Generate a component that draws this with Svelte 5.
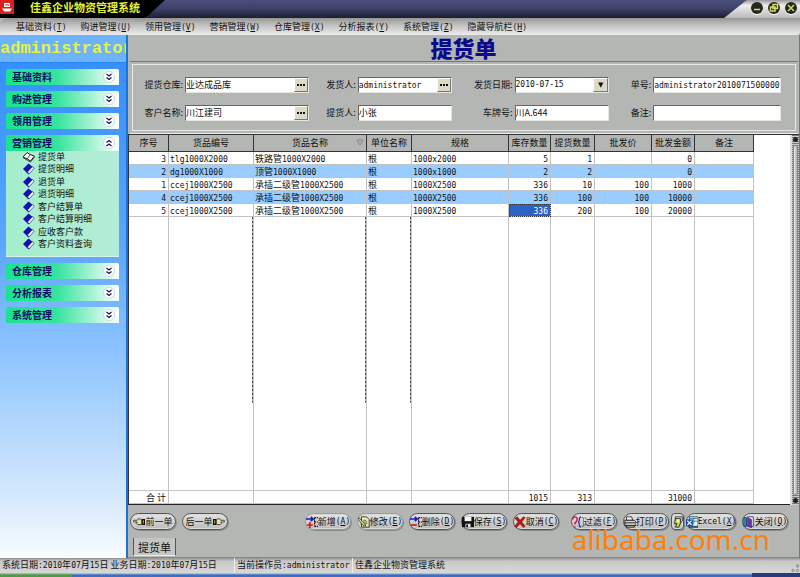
<script lang="ts">
	const menus = [
		{ label: '基础资料', key: 'T' },
		{ label: '购进管理', key: 'U' },
		{ label: '领用管理', key: 'V' },
		{ label: '营销管理', key: 'W' },
		{ label: '仓库管理', key: 'X' },
		{ label: '分析报表', key: 'Y' },
		{ label: '系统管理', key: 'Z' },
		{ label: '隐藏导航栏', key: 'H' }
	];

	const groups = [
		{ title: '基础资料', items: [] },
		{ title: '购进管理', items: [] },
		{ title: '领用管理', items: [] },
		{
			title: '营销管理',
			items: ['提货单', '提货明细', '退货单', '退货明细', '客户结算单', '客户结算明细', '应收客户款', '客户资料查询']
		},
		{ title: '仓库管理', items: [] },
		{ title: '分析报表', items: [] },
		{ title: '系统管理', items: [] }
	];

	const columns = ['序号', '货品编号', '货品名称', '单位名称', '规格', '库存数量', '提货数量', '批发价', '批发金额', '备注'];
	const numeric = [0, 5, 6, 7, 8];
	const worn = [1, 2, 3];

	const rows = [
		['3', 'tlg1000X2000', '铁路管1000X2000', '根', '1000x2000', '5', '1', '', '0', ''],
		['2', 'dg1000X1000', '顶管1000X1000', '根', '1000x1000', '2', '2', '', '0', ''],
		['1', 'ccej1000X2500', '承插二级管1000X2500', '根', '1000X2500', '336', '10', '100', '1000', ''],
		['4', 'ccej1000X2500', '承插二级管1000X2500', '根', '1000X2500', '336', '100', '100', '10000', ''],
		['5', 'ccej1000X2500', '承插二级管1000X2500', '根', '1000X2500', '336', '200', '100', '20000', '']
	];
	const totals = ['合 计', '', '', '', '', '1015', '313', '', '31000', ''];

	const editActions = [
		{ icon: 'add', label: '新增', key: 'A', off: true },
		{ icon: 'edit', label: '修改', key: 'E', off: true },
		{ icon: 'del', label: '删除', key: 'D' },
		{ icon: 'save', label: '保存', key: 'S' },
		{ icon: 'cancel', label: '取消', key: 'C' }
	];

	let open = $state('营销管理');

	// Latin runs are set in a narrower mono face than the Chinese around them
	function runs(text: string) {
		return text.match(/[\x21-\x7e]+|[^\x21-\x7e]+/g) ?? [];
	}
</script>

{#snippet mixed(text: string)}
	{#each runs(text) as run}{#if /^[\x21-\x7e]/.test(run)}<span class="latin">{run}</span>{:else}{run}{/if}{/each}
{/snippet}

{#snippet keyed(label: string, key: string)}
	{@render mixed(label)}<span class="latin">(<u>{key}</u>)</span>
{/snippet}

{#snippet icon(name: string)}
	<svg class="icon" viewBox="0 0 14 14" aria-hidden="true">
		{#if name === 'add' || name === 'del'}
			<path d="M0 3.5h8M5.5 1 8.5 3.5 5.5 6" stroke="#1818d0" stroke-width="1.8" fill="none" />
			<path d="M10 2h4M10 2v10M10 7h4M10 12h4" stroke="#111" stroke-width="1.4" stroke-dasharray="2 1" fill="none" />
			{#if name === 'add'}
				<path d="M4.5 7v7M1 10.5h7" stroke="#e01818" stroke-width="2" />
			{:else}
				<path d="M1 10.5h7" stroke="#e01818" stroke-width="2" />
			{/if}
		{:else if name === 'edit'}
			<path d="M4 1h6l3 3v9H4z" fill="#e9eebc" stroke="#222" />
			<path d="M6 5h4M6 7h5M6 9h5" stroke="#333" stroke-width=".8" />
			<path d="M1 2 8 9l1 3-3-1L0 4z" fill="#c9d36b" stroke="#222" stroke-width=".8" />
		{:else if name === 'save'}
			<path d="M0 1h14v12H0z" fill="#111" />
			<path d="M3 1h8v5H3z" fill="#f4f4f4" />
			<path d="M4 9h6v4H4z" fill="#ddd" />
			<path d="M5 10h2v3H5z" fill="#111" />
		{:else if name === 'cancel'}
			<path d="M1 2.5 4 1l3 4 4-4 2 1-4 5 4 5-2 1.5-4-4.5-4 4.5L.5 12 5 7z" fill="#c01414" stroke="#701010" stroke-width=".6" />
		{:else if name === 'filter'}
			<path d="M1 4q0-3 2.5-3T6 4q0 2-2.5 4v2M3.5 12v1.5" stroke="#d01c3c" stroke-width="1.7" fill="none" />
			<path d="M10.5 1Q8.5 1 8.5 4T7 7Q8.5 7 8.5 10t2 3" stroke="#2a2ad0" stroke-width="1.4" fill="none" />
			<path d="M11.5 2h2v10h-2" stroke="#333" stroke-dasharray="1.5 1" fill="none" />
		{:else if name === 'print'}
			<path d="M3 1h6l1 4H3z" fill="#fff" stroke="#222" />
			<path d="M1 5h11l2 2v4H1z" fill="#d6d6d6" stroke="#111" />
			<path d="M1 8h12M3 11v2h9v-2" stroke="#111" fill="none" />
			<path d="M9 9.5h2" stroke="#dada28" />
		{:else if name === 'preview'}
			<path d="M4 1h8v5L9 9H4z" fill="#f4f4e0" stroke="#222" />
			<path d="M4 3h6v5L8 13H4l2-4H3z" fill="#c9e04c" stroke="#222" />
			<path d="M6 4h2v3H6z" fill="#fff" />
		{:else if name === 'excel'}
			<path d="M4 1h10v11H4z" fill="#dff" stroke="#124a68" />
			<path d="M5 3h8M5 6h8M9 2v8" stroke="#247a9a" />
			<path d="M0 4h8v8H0z" fill="#164da8" />
			<path d="m1.5 5.5 5 5m0-5-5 5" stroke="#fff" stroke-width="1.3" />
			<path d="M3 13h11" stroke="#111" />
		{:else if name === 'close'}
			<path d="M1 2h3v10H1z" fill="#23a6b8" stroke="#13306c" />
			<path d="M5 1h7v11H5z" fill="#fff" stroke="#13306c" />
			<path d="m6 2 4 2v10l-4-2z" fill="#7034a4" stroke="#301060" stroke-width=".6" />
		{:else if name === 'prev' || name === 'next'}
			<g transform={name === 'next' ? 'matrix(-1 0 0 1 14 0)' : undefined}>
				<path d="M10 4v6H5.5L4 8.5 5 7H1Q-.3 6 1 5h4l1.5-2z" fill="#e8e39c" stroke="#222" stroke-width=".9" />
				<path d="M10.5 3.5H14v7h-3.5z" fill="#111" />
				<path d="M12 5v4" stroke="#c8c878" />
			</g>
		{/if}
	</svg>
{/snippet}

<svelte:head>
	<title>佳鑫企业物资管理系统</title>
</svelte:head>

<div class="window">
	<header class="titlebar">
		<div class="brand">
			<svg class="logo" viewBox="0 0 14 14" aria-hidden="true">
				<path d="M0 0h14v14H0z" fill="#d9201c" />
				<path d="M4 3h6v4H4zM7 1v6M2 8.5h10l-2 3H4z" fill="#fff" />
				<path d="M5 5h4M1 12.5h12" stroke="#d9201c" />
			</svg>
			<h1>佳鑫企业物资管理系统</h1>
		</div>
		<div class="controls">
			<button aria-label="最小化"><svg viewBox="0 0 12 12"><path d="M3 7.5h6" /></svg></button>
			<button aria-label="还原"><svg viewBox="0 0 12 12"><path d="M5 2.5h4.5v4H5zM2.5 5H7v4H2.5z" /></svg></button>
			<button aria-label="关闭窗口"><svg viewBox="0 0 12 12"><path d="m3 3 6 6m0-6L3 9" /></svg></button>
		</div>
	</header>

	<nav class="menubar">
		{#each menus as menu}
			<a href="#menu">{@render keyed(menu.label, menu.key)}</a>
		{/each}
	</nav>

	<div class="body">
		<aside class="sidebar">
			<p class="user">administrator</p>
			<div class="groups">
				{#each groups as group}
					<section class="group">
						<button class="group-head" onclick={() => (open = open === group.title ? '' : group.title)}>
							<span>{group.title}</span>
							<svg class="chevron" class:up={open === group.title} viewBox="0 0 12 12" aria-hidden="true">
								<circle cx="6" cy="6" r="5.5" fill="#fff" stroke="#c4dce0" />
								<path d="m3.5 3 2.5 2L8.5 3m-5 3.5 2.5 2 2.5-2" />
							</svg>
						</button>
						{#if open === group.title && group.items.length}
							<ul>
								{#each group.items as item, i}
									<li>
										<svg class="book" viewBox="0 0 13 12" aria-hidden="true">
											{#if i === 0}
												<path d="M1 6 5 1.5l3 2L12.5 5l-4 5-3-2z" fill="#fff" stroke="#222" />
												<path d="m5 8 3-4M1 6.5 5 9l3.5 2 4-5" stroke="#222" fill="none" stroke-width=".8" />
											{:else}
												<path d="m1 6 5.5-5.5L12 5 6.5 11.5z" fill="#1111b0" />
												<path d="m5.5 9 5-5.5 1.5 2-5 5.5z" fill="#fff" stroke="#1111b0" stroke-width=".6" />
											{/if}
										</svg>
										<a href="#item">{item}</a>
									</li>
								{/each}
							</ul>
						{/if}
					</section>
				{/each}
			</div>
		</aside>

		<main>
			<h2>提货单</h2>

			<div class="panel">
				<form class="fields">
					<label for="depot">提货仓库:</label>
					<div class="box">
						<input id="depot" value="业达成品库" />
						<button type="button" class="more" aria-label="选择仓库"></button>
					</div>
					<label for="sender">发货人:</label>
					<div class="box">
						<input id="sender" class="latin" value="administrator" />
						<button type="button" class="more" aria-label="选择发货人"></button>
					</div>
					<label for="date">发货日期:</label>
					<div class="box drop">
						<select id="date" class="latin"><option>2010-07-15</option></select>
					</div>
					<label for="serial">单号:</label>
					<div class="box"><input id="serial" class="latin" value="administrator2010071500000" /></div>

					<label for="client">客户名称:</label>
					<div class="box">
						<input id="client" value="川江建司" />
						<button type="button" class="more" aria-label="选择客户"></button>
					</div>
					<label for="taker">提货人:</label>
					<div class="box"><input id="taker" value="小张" /></div>
					<label for="plate">车牌号:</label>
					<div class="box"><input id="plate" value="川A.644" /></div>
					<label for="note">备注:</label>
					<div class="box"><input id="note" value="" /></div>
				</form>
			</div>

			<div class="grid">
				<div class="sheet">
					<table>
						<colgroup>
							{#each columns as _, i}<col class="c{i}" />{/each}
						</colgroup>
						<thead>
							<tr>
								{#each columns as column, i}
									<th>{column}{#if i === 2}<svg class="sort" viewBox="0 0 8 7" aria-hidden="true"><path d="M1 1h6L4 6z" /></svg>{/if}</th>
								{/each}
							</tr>
						</thead>
						<tbody>
							{#each rows as row, r}
								<tr class:alt={r % 2 === 1}>
									{#each row as cell, i}
										<td class:num={numeric.includes(i)} class:picked={r === 4 && i === 5}>{@render mixed(cell)}</td>
									{/each}
								</tr>
							{/each}
							<tr class="filler">
								{#each columns as _, i}<td class:worn={worn.includes(i)}></td>{/each}
							</tr>
						</tbody>
						<tfoot>
							<tr>
								{#each totals as cell, i}
									<td class:num={numeric.includes(i)}>{@render mixed(cell)}</td>
								{/each}
							</tr>
						</tfoot>
					</table>
				</div>
				<div class="scroll">
					<span class="knob"></span>
					<span class="thumb"></span>
					<span class="knob"></span>
				</div>
			</div>

			<div class="toolbar">
				<div class="set">
					<button>{@render icon('prev')}前一单</button>
					<button>后一单{@render icon('next')}</button>
				</div>
				<div class="set actions">
					{#each editActions as action}
						<button class:off={action.off}>{@render icon(action.icon)}{@render keyed(action.label, action.key)}</button>
					{/each}
				</div>
				<div class="set output">
					<button>{@render icon('filter')}{@render keyed('过滤', 'F')}</button>
					<div class="set tight">
						<button>{@render icon('print')}{@render keyed('打印', 'P')}</button>
						<button class="mini" aria-label="预览">{@render icon('preview')}</button>
						<button class="wide">{@render icon('excel')}{@render keyed('Excel', 'X')}</button>
					</div>
					<button>{@render icon('close')}{@render keyed('关闭', 'Q')}</button>
				</div>
				<p class="watermark">alibaba.com.cn</p>
			</div>

			<div class="tabs"><button>提货单</button></div>
		</main>
	</div>

	<footer class="status">
		<span class="dates">{@render mixed('系统日期:2010年07月15日 业务日期:2010年07月15日')}</span>
		<span class="operator">{@render mixed('当前操作员:administrator')}</span>
		<span class="company">佳鑫企业物资管理系统</span>
		<svg class="grip" viewBox="0 0 9 9" aria-hidden="true">
			<circle cx="6.5" cy="2" r="1.3" /><circle cx="2" cy="6.5" r="1.3" /><circle cx="6.5" cy="6.5" r="1.3" />
		</svg>
	</footer>
	<div class="taskbar"><span class="start"></span><span class="tray"></span></div>
</div>

<style>
	:global(body) {
		margin: 0;
	}

	.window {
		display: flex;
		flex-direction: column;
		min-height: 100vh;
		background: #b4b6b3;
		color: #111;
		font: 9px/12px 'Noto Sans CJK SC', sans-serif;
	}

	.window * {
		box-sizing: border-box;
	}

	button,
	input,
	select {
		margin: 0;
		padding: 0;
		border: 0;
		font: inherit;
		color: inherit;
	}

	a {
		color: inherit;
		text-decoration: none;
	}

	.latin {
		font-family: 'DejaVu Sans Mono', 'Noto Sans CJK SC', monospace;
		font-size: 8px;
		line-height: 8px;
	}

	.titlebar {
		display: flex;
		justify-content: space-between;
		height: 18px;
		background: linear-gradient(#4c4f7c, #3e4068 50%, #1d1c30);
	}

	.brand {
		display: flex;
		gap: 16px;
		width: 165px;
		background: #000;
		clip-path: polygon(0 0, 100% 0, 90% 85%, 87% 100%, 0 100%);
	}

	.logo {
		width: 14px;
		height: 14px;
	}

	h1 {
		margin: 0;
		font-size: 11px;
		line-height: 14px;
		font-weight: 700;
		color: #e2f23c;
	}

	.controls {
		display: flex;
		justify-content: flex-end;
		gap: 5px;
		width: 76px;
		padding: 2px 3px 0 0;
		background: linear-gradient(#999, #eee 30%, #b9b9b9);
		clip-path: polygon(30% 0, 100% 0, 100% 100%, 0 100%);
	}

	.controls button {
		width: 12px;
		height: 12px;
		border-radius: 50%;
		background: #25281c;
		box-shadow: 0 1px 1px #fff;
	}

	.controls svg {
		display: block;
		fill: none;
		stroke: #d4dc6a;
		stroke-width: 1.5;
	}

	.menubar {
		display: flex;
		gap: 14px;
		height: 17px;
		padding: 3px 16px 0;
		border-radius: 8px 0 4px 0;
		background: linear-gradient(#949694, #bfbfbf 40%, #ededed);
		white-space: nowrap;
	}

	.body {
		display: flex;
		flex: 1;
	}

	.sidebar {
		flex: 0 0 128px;
		width: 128px;
		border-right: 2px solid #1c72d8;
		background: linear-gradient(#2f8cff, #5ca6fb 40%, #8cc3ff 60%, #d4e8fc 88%, #f8fcff);
	}

	.user {
		margin: 0;
		padding-top: 2px;
		height: 28px;
		overflow: hidden;
		background: #6cb2fd;
		border-bottom: 1px solid #2585f4;
		font: 700 17px/24px 'Liberation Mono', monospace;
		color: #eaf23a;
	}

	.groups {
		display: flex;
		flex-direction: column;
		gap: 6px;
		padding: 6px 7px 0 6px;
	}

	.group-head {
		display: flex;
		align-items: center;
		justify-content: space-between;
		width: 100%;
		height: 16px;
		padding: 0 4px 0 6px;
		border-radius: 2px 2px 0 0;
		background: linear-gradient(90deg, #1be291, #35e39d 45%, #fff);
		font-size: 10px;
		line-height: 14px;
		font-weight: 700;
		color: #0b0b66;
	}

	.chevron {
		width: 12px;
		height: 12px;
	}

	.chevron path {
		fill: none;
		stroke: #111150;
		stroke-width: 1.2;
	}

	.chevron.up {
		transform: rotate(180deg);
	}

	ul {
		display: flex;
		flex-direction: column;
		justify-content: space-between;
		height: 106px;
		margin: 0;
		padding: 0 0 6px 16px;
		background: linear-gradient(90deg, #a4eecb, #b4ecd8);
		border-bottom: 1px solid #d8f6ea;
		list-style: none;
	}

	li {
		display: flex;
		align-items: center;
		gap: 3px;
		height: 12px;
	}

	.book {
		width: 13px;
		height: 12px;
	}

	main {
		display: flex;
		flex: 1;
		flex-direction: column;
		min-width: 0;
		border-right: 1px solid #777;
	}

	h2 {
		margin: 0;
		height: 26px;
		font-size: 22px;
		line-height: 25px;
		font-weight: 900;
		text-align: center;
		color: #0a0a8c;
	}

	.panel {
		margin: 0 1px 0 2px;
		padding: 2px;
		border-top: 1px solid #777;
		border-bottom: 1px solid #eee;
	}

	.fields {
		display: grid;
		grid-template-columns: 43px 124fr 49px 94fr 63px 95fr 44px 128fr;
		row-gap: 12px;
		align-items: center;
		padding: 12px 14px 9px 9px;
		border: 1px solid #e8e8e8;
	}

	label {
		padding-right: 2px;
		text-align: right;
		white-space: nowrap;
	}

	.box {
		display: flex;
		height: 16px;
		min-width: 0;
		border: 1px solid #e6e6e0;
		border-top-color: #666;
		border-left-color: #666;
		background: #fff;
	}

	input,
	select {
		flex: 1;
		min-width: 0;
		width: 100%;
		background: transparent;
		outline: 0;
	}

	select {
		appearance: none;
	}

	select.latin {
		line-height: 14px;
	}

	.more {
		flex: 0 0 14px;
		border: 1px solid #fff;
		border-right-color: #777;
		border-bottom-color: #777;
		background: repeating-linear-gradient(90deg, #111 0 2px, transparent 2px 3px) 2px 5px / 8px 2px no-repeat #dedac8;
	}

	.drop::after {
		content: '▼';
		flex: 0 0 13px;
		border: 1px solid #fff;
		border-right-color: #777;
		border-bottom-color: #777;
		background: #dedac8;
		font: 7px/12px 'DejaVu Sans', sans-serif;
		text-align: center;
	}

	.grid {
		display: flex;
		flex: 1;
		border-top: 1px solid #333;
	}

	.sheet {
		display: flex;
		flex: 1;
		min-width: 0;
		background: #fff;
		border-bottom: 1px solid #222;
		border-left: 1px solid #333;
	}

	table {
		width: 625px;
		table-layout: fixed;
		border-collapse: separate;
		border-spacing: 0;
	}

	.c0 { width: 40px; }
	.c1 { width: 85px; }
	.c2 { width: 113px; }
	.c3 { width: 45px; }
	.c4 { width: 97px; }
	.c5 { width: 42px; }
	.c6 { width: 44px; }
	.c7 { width: 57px; }
	.c8 { width: 43px; }
	.c9 { width: 59px; }

	th {
		position: relative;
		height: 17px;
		padding: 0;
		border-right: 1px solid #333;
		border-bottom: 1px solid #333;
		background: #b4b6b3;
		font-weight: 400;
		white-space: nowrap;
	}

	.sort {
		position: absolute;
		right: 2px;
		top: 4px;
		width: 8px;
		height: 7px;
		fill: none;
		stroke: #888;
	}

	td {
		height: 13px;
		padding: 0 2px 0 1px;
		border-right: 1px solid #c2c2c2;
		border-bottom: 1px solid #c2c2c2;
		line-height: 11px;
		white-space: nowrap;
	}

	.num {
		text-align: right;
	}

	.alt td {
		background: #99ccff;
		border-bottom-color: #99ccff;
	}

	.picked {
		background: #2b62c4;
		color: #fff;
		outline: 1px dotted #333;
		outline-offset: -1px;
	}

	.filler td {
		height: auto;
	}

	.filler .worn {
		background: repeating-linear-gradient(#444 0 2px, #bbb 2px 4px) right top / 1px 68% no-repeat;
	}

	.scroll {
		display: flex;
		flex: 0 0 9px;
		flex-direction: column;
		align-items: center;
		padding: 2px 0;
		background: repeating-linear-gradient(#777 0 1px, #ccc 1px 2px);
		border-left: 2px solid #ddd;
	}

	.knob {
		width: 5px;
		height: 5px;
		border-radius: 50%;
		background: #222;
	}

	.thumb {
		flex: 1;
		width: 5px;
		margin: 3px 0;
		border: 1px solid #888;
		border-radius: 3px;
		background: linear-gradient(90deg, #eee, #aaa);
	}

	.toolbar {
		position: relative;
		display: flex;
		align-items: center;
		height: 33px;
		padding: 0 11px 0 2px;
	}

	.set {
		display: flex;
		gap: 6px;
	}

	.tight {
		gap: 2px;
	}

	.actions {
		margin-left: auto;
	}

	.output {
		margin-left: 12px;
	}

	.toolbar button {
		display: flex;
		align-items: center;
		justify-content: center;
		width: 46px;
		height: 17px;
		border: 1px solid #555;
		border-radius: 9px;
		background: linear-gradient(#e4e4e4, #bcbcbc);
		box-shadow: inset 0 0 0 1px #d9d9d9, 1px 1px 0 #8a8a8a;
		white-space: nowrap;
	}

	.toolbar .off {
		border-color: #999;
	}

	.toolbar .mini {
		width: 13px;
		border-radius: 4px;
	}

	.toolbar .wide {
		width: 50px;
	}

	.icon {
		flex: none;
		width: 12px;
		height: 12px;
	}

	.watermark {
		position: absolute;
		right: 29px;
		top: 24px;
		margin: 0;
		font: 28px/20px 'Noto Sans', sans-serif;
		color: #ff7f0e;
		pointer-events: none;
	}

	.tabs {
		height: 20px;
		padding-left: 5px;
		border-bottom: 1px solid #888;
	}

	.tabs button {
		height: 18px;
		padding: 0 4px;
		border-left: 1px solid #555;
		border-right: 1px solid #555;
		border-bottom: 1px solid #eee;
		background: #c4c6c3;
		font-size: 11px;
		line-height: 16px;
	}

	.status {
		display: flex;
		height: 15px;
		background: linear-gradient(#8e8e8e, #c8c8c8 20%, #d8d8d8);
		line-height: 14px;
		white-space: nowrap;
	}

	.status span.dates {
		width: 235px;
		padding-left: 2px;
		border-right: 1px solid #eee;
	}

	.status span.operator {
		width: 118px;
		padding-left: 2px;
		border-right: 1px solid #eee;
	}

	.status span.company {
		flex: 1;
		padding-left: 2px;
	}

	.grip {
		align-self: flex-end;
		width: 9px;
		height: 9px;
		fill: #bbb;
		stroke: #777;
		stroke-width: 0.6;
	}

	.taskbar {
		display: flex;
		justify-content: space-between;
		height: 4px;
		background: linear-gradient(#ccd8e8, #3a6fc0 50%);
	}

	.start {
		width: 9%;
		background: linear-gradient(#b8ccb0, #4c9a48 50%);
	}

	.tray {
		width: 6%;
		background: #253c80;
	}
</style>
